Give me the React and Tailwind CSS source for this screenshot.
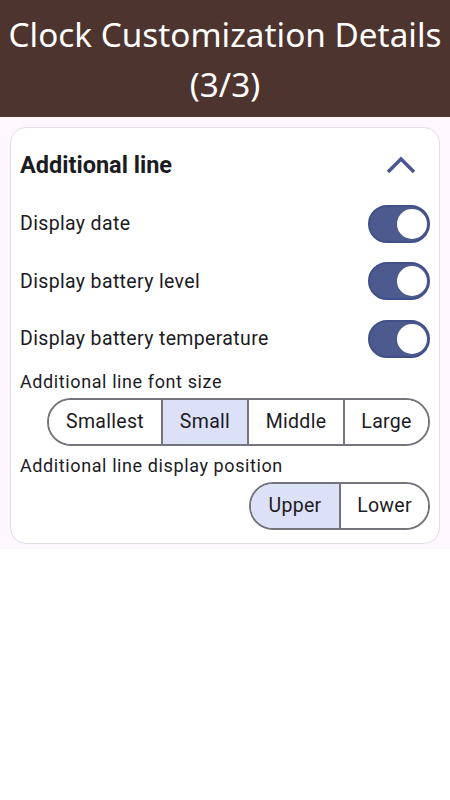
import React from "react";

function Toggle() {
  return (
    <div className="w-[62px] h-[38px] rounded-full bg-[#4d5a8e] border-2 border-[#42508a] flex items-center justify-end pr-[1px]">
      <div className="w-[30px] h-[30px] rounded-full bg-white" />
    </div>
  );
}

function Row({ label }) {
  return (
    <div className="flex items-center justify-between h-[57.5px]">
      <span className="text-[19.5px] tracking-[0.35px] text-[#1c1b1f]">{label}</span>
      <Toggle />
    </div>
  );
}

function Segmented({ items, selected, widths }) {
  return (
    <div className="flex h-[48px] border-2 border-[#75747c] rounded-full overflow-hidden">
      {items.map((it, i) => (
        <div
          key={it}
          className={
            "flex items-center justify-center text-[19.5px] tracking-[0.3px] text-[#1c1b1f] " +
            (i > 0 ? "border-l-2 border-[#75747c] " : "") +
            (i === selected ? "bg-[#dde1f8]" : "bg-white")
          }
          style={{ width: widths[i] }}
        >
          {it}
        </div>
      ))}
    </div>
  );
}

export default function App() {
  return (
    <div className="w-[450px] h-[800px] bg-white" style={{ fontFamily: "Roboto, 'Noto Sans', sans-serif" }}>
      <div className="h-[117px] bg-[#4e342e] flex flex-col items-center justify-center text-white text-[33.3px] leading-[50px] text-center" style={{ fontFamily: "'Noto Sans', 'Open Sans', sans-serif" }}>
        <div>Clock Customization Details</div>
        <div>(3/3)</div>
      </div>
      <div className="bg-[#fdf8fd] px-[10px] pt-[10px] pb-[5px]">
        <div className="bg-white border border-[#e2dee6] rounded-[16px] px-[9px] pb-[13px]">
          <div className="flex items-center justify-between h-[67px] pt-[9px]">
            <span className="text-[23.5px] font-bold text-[#1c1b1f]">Additional line</span>
            <svg width="30" height="18" viewBox="0 0 30 18" className="mr-[14px] mt-[-2px]">
              <path d="M2 16 L15 3 L28 16" fill="none" stroke="#4a5690" strokeWidth="3.5" />
            </svg>
          </div>
          <Row label="Display date" />
          <Row label="Display battery level" />
          <Row label="Display battery temperature" />
          <div className="text-[18px] tracking-[0.6px] text-[#1c1b1f] mt-[1px] leading-[26px]">Additional line font size</div>
          <div className="flex justify-end mt-[3px]">
            <Segmented items={["Smallest", "Small", "Middle", "Large"]} selected={1} widths={[112, 86, 96, 85]} />
          </div>
          <div className="text-[18px] tracking-[0.6px] text-[#1c1b1f] mt-[7px] leading-[26px]">Additional line display position</div>
          <div className="flex justify-end mt-[3px]">
            <Segmented items={["Upper", "Lower"]} selected={0} widths={[88, 89]} />
          </div>
        </div>
      </div>
    </div>
  );
}
